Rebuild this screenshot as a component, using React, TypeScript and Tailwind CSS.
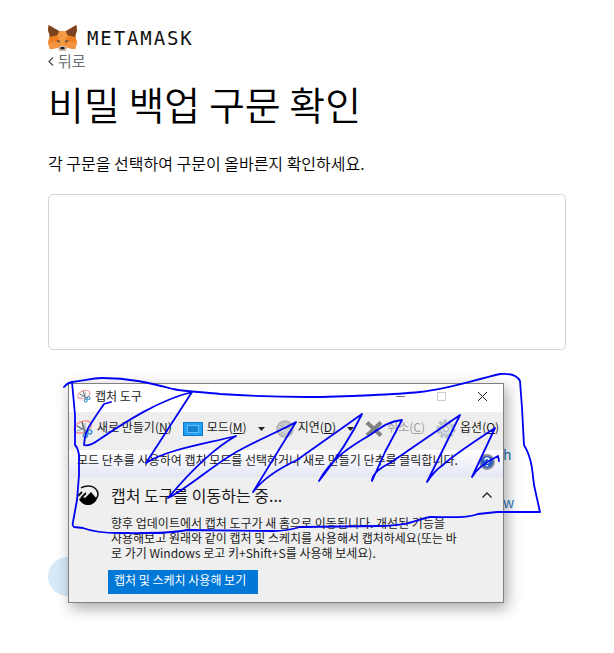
import type { ReactNode } from "react";

function FoxLogo() {
  return (
    <svg viewBox="0 0 87 84" className="h-7 w-[29px]" aria-hidden="true">
      <path d="M2 3 34 22h19L85 3l2 16-5 17 5 20-6 20-24-5-5 10H35l-5-10-24 5L0 56l5-20L0 19z" fill="#f08a2c" />
      <path d="M2 3 34 22l-5 12-23 6-3-12L0 19z" fill="#7a4420" />
      <path d="M85 3 53 22l5 12 23 6 3-12 3-9z" fill="#7a4420" />
      <path d="M34 22h19l5 12-8 34H37l-8-34z" fill="#f39a45" />
      <path d="M29 34 5 40 0 56l26-3 8 3zM58 34l24 6 5 16-26-3-8 3z" fill="#ee8020" />
      <path d="M26 53 0 56l6 20 24-5 7-3zM61 53l26 3-6 20-24-5-7-3z" fill="#f59440" />
      <path d="M23 50l13-1-1 7zM64 50l-13-1 1 7z" fill="#5c5048" />
      <path d="M30 70l7-4h13l7 4-6 11H36z" fill="#cdbcb2" />
      <path d="M38 69h11l1 7H37z" fill="#1d1d20" />
    </svg>
  );
}

function ScissorsIcon({ className }: { className: string }) {
  return (
    <svg viewBox="0 0 20 20" className={className} fill="none" aria-hidden="true">
      <ellipse cx="9.800" cy="8" rx="9" ry="5.500" transform="rotate(-22 9.800 8)" stroke="#f58a8a" strokeWidth="1.300" />
      <path d="M9 3l3 11M4 7l11 6" stroke="#56606a" strokeWidth="1.400" />
      <path d="M4 12l9-3M12 4v9" stroke="#9aa3aa" />
      <circle cx="12.500" cy="16.500" r="2" stroke="#3a95cf" strokeWidth="1.600" />
      <circle cx="16.800" cy="13" r="2" stroke="#3a95cf" strokeWidth="1.600" />
    </svg>
  );
}

function ModeIcon() {
  return (
    <svg viewBox="0 0 20 14" className="h-[14px] w-5" aria-hidden="true">
      <rect x=".5" y=".5" width="19" height="13" fill="#1fa2f5" stroke="#1277c4" />
      <rect x="4.500" y="3.500" width="11" height="7" fill="#1583d2" stroke="#b5e0ff" strokeDasharray="1 1" />
    </svg>
  );
}

function ClockIcon() {
  return (
    <svg viewBox="0 0 18 18" className="size-[18px]" fill="none" aria-hidden="true">
      <circle cx="9" cy="9" r="7.800" fill="#d3d5d7" stroke="#b1b4b7" strokeWidth="2" />
      <circle cx="9" cy="9" r="5" stroke="#93979b" strokeWidth="1.500" strokeDasharray="1 1.600" />
      <path d="M5 5l4 4 4-2" stroke="#8a8e92" />
    </svg>
  );
}

function CrossIcon() {
  return (
    <svg viewBox="0 0 18 16" className="h-4 w-[18px]" aria-hidden="true">
      <path d="M2 1.500 16 14.500M16 1.500 2 14.500" stroke="#828282" strokeWidth="4" />
    </svg>
  );
}

function GearIcon() {
  return (
    <svg viewBox="0 0 20 20" className="size-5" fill="none" aria-hidden="true">
      <circle cx="10" cy="10" r="8.300" stroke="#b5c0c6" strokeWidth="2.600" strokeDasharray="3.200 2" />
      <circle cx="10" cy="10" r="6.500" fill="#d5dcdf" stroke="#b5c0c6" strokeWidth="1.500" />
      <circle cx="10" cy="10" r="2.500" fill="#eee" stroke="#a9b3b9" />
    </svg>
  );
}

function HelpIcon() {
  return (
    <svg viewBox="0 0 16 16" className="size-4" fill="none" aria-hidden="true">
      <circle cx="8" cy="8" r="7" fill="#2c5fc4" stroke="#8c8f99" strokeWidth="1.800" />
      <path d="M5.800 6.200a2.200 2.200 0 1 1 3.300 2Q8 8.800 8 9.800M8 11v1.600" stroke="#fff" strokeWidth="1.600" />
    </svg>
  );
}

function SketchIcon() {
  return (
    <svg viewBox="0 0 22 20" className="h-5 w-[22px]" fill="none" aria-hidden="true">
      <path d="M4 3C6 1.500 9 1 12 1c5 0 9 4 9 8 0 2-1 4-2 5" stroke="#111" strokeWidth="1.500" />
      <path d="M2 14l4-2 2 1 6-6 6 7c-2 4-5 6-9 6-4 0-7-2-9-6z" fill="#000" />
      <path d="M1 11 5 7M4 13 9 8" stroke="#111" strokeWidth="1.800" />
    </svg>
  );
}

function Caret() {
  return (
    <svg viewBox="0 0 7 4" className="h-1 w-[7px]" aria-hidden="true">
      <path d="M0 0h7L3.500 4z" fill="#222" />
    </svg>
  );
}

type ToolProps = { icon: ReactNode; label: string; hotkey: string; disabled?: boolean };

function Tool({ icon, label, hotkey, disabled }: ToolProps) {
  return (
    <button type="button" disabled={disabled} className="flex items-center gap-1 whitespace-nowrap disabled:text-[#a0a0a0]">
      {icon}
      <span className="pb-1">
        {label}(<u>{hotkey}</u>)
      </span>
    </button>
  );
}

function SnippingTool() {
  return (
    <div
      role="dialog"
      aria-label="캡처 도구"
      className="absolute top-[33px] left-[20px] w-[436px] border border-[#808080] bg-[#efefef] text-[12px] text-[#1a1a1a] shadow-[3px_5px_14px_rgba(0,0,0,0.35)]"
    >
      <div className="flex h-7 items-center bg-white pr-4 pb-1 pl-2">
        <ScissorsIcon className="mr-1 size-[14px]" />
        <span className="flex-1">캡처 도구</span>
        <div className="flex items-center gap-8">
          <button type="button" aria-label="최소화">
            <svg viewBox="0 0 9 9" className="size-[9px]" stroke="#777">
              <path d="M0 4.500h9" />
            </svg>
          </button>
          <button type="button" aria-label="최대화" disabled>
            <svg viewBox="0 0 9 9" className="size-[9px]" fill="none" stroke="#ccc">
              <path d="M.5.5h8v8h-8z" />
            </svg>
          </button>
          <button type="button" aria-label="닫기">
            <svg viewBox="0 0 9 9" className="size-[9px]" stroke="#222">
              <path d="M0 0l9 9M9 0 0 9" />
            </svg>
          </button>
        </div>
      </div>

      <div className="flex h-[38px] items-center gap-[11px] bg-[#eee] pb-1 pl-1">
        <Tool icon={<ScissorsIcon className="size-5" />} label="새로 만들기" hotkey="N" />
        <Tool icon={<ModeIcon />} label="모드" hotkey="M" />
        <button type="button" aria-label="모드 선택">
          <Caret />
        </button>
        <Tool icon={<ClockIcon />} label="지연" hotkey="D" />
        <button type="button" aria-label="지연 시간 선택">
          <Caret />
        </button>
        <Tool icon={<CrossIcon />} label="취소" hotkey="C" disabled />
        <Tool icon={<GearIcon />} label="옵션" hotkey="O" />
      </div>

      <div className="flex h-[27px] items-center justify-between bg-linear-to-b from-white to-[#e4e6f4] px-2 pb-1 whitespace-nowrap">
        <span className="pb-1">모드 단추를 사용하여 캡처 모드를 선택하거나 새로 만들기 단추를 클릭합니다.</span>
        <button type="button" aria-label="도움말">
          <HelpIcon />
        </button>
      </div>

      <div className="flex gap-3 pt-2 pr-[11px] pb-2 pl-2">
        <SketchIcon />
        <div className="flex-1">
          <div className="flex items-center justify-between">
            <h2 className="text-[16px] leading-5">캡처 도구를 이동하는 중...</h2>
            <button type="button" aria-label="접기">
              <svg viewBox="0 0 10 6" className="h-[6px] w-[10px]" fill="none" stroke="#222" strokeWidth="1.300">
                <path d="M.5 5.500 5 1l4.500 4.500" />
              </svg>
            </button>
          </div>
          <p className="mt-[10px] leading-[15px] whitespace-nowrap">
            향후 업데이트에서 캡처 도구가 새 홈으로 이동됩니다. 개선된 기능을
            <br />
            사용해보고 원래와 같이 캡처 및 스케치를 사용해서 캡처하세요(또는 바
            <br />로 가기 Windows 로고 키+Shift+S를 사용해 보세요).
          </p>
          <button type="button" className="mt-[10px] -ml-[3px] flex h-6 w-[150px] items-center bg-[#0078d7] px-[6px] pb-1 whitespace-nowrap text-white">
            캡처 및 스케치 사용해 보기
          </button>
        </div>
      </div>
    </div>
  );
}

// freehand pen marks drawn over the tool window
function PenMarks() {
  return (
    <svg
      viewBox="60 370 484 168"
      className="pointer-events-none absolute top-[20px] left-[12px] h-[168px] w-[484px]"
      fill="none"
      stroke="#0000f5"
      strokeWidth="1.800"
      strokeLinecap="round"
      strokeLinejoin="round"
      aria-hidden="true"
    >
      <path d="M64 387Q67 383 72 382C85 381 90 378 102 378 130 378 150 383 173 389 188 392 204 392 220 394 250 396 280 397 307 397 345 397 400 394 420 392 450 389 470 381 500 374 512 373 518 377 520 381L522 408 524 445Q530 455 532 468L534 485 540 512H497L478 514C468 518 455 517 430 517 415 520 408 526 380 526L300 527Q287 531 273 531L187 530C170 534 140 533 120 533 100 533 88 530 83 528L74 527Q72 526 73 522L77 500 79 475V455Q78 448 75 445L75 415 72 382" />
      <path d="M111 402 104 404Q97 414 90 425 85 432 84 445 89 447 100 439C128 420 160 400 192 392L146 463C166 450 200 445 236 436 212 449 190 472 168 498 190 487 215 463 240 450 258 440 280 431 296 422L253 492C262 480 280 468 297 460L362 414C350 439 337 458 319 481 331 458 353 445 370 435 380 428 389 421 402 420L385 452 372 481Q372 472 390 463L460 415 427 482Q435 470 443 465C455 454 477 440 495 428L472 477Q478 466 498 456L499 461" />
    </svg>
  );
}

export default function App() {
  return (
    <main className="min-h-screen overflow-x-clip bg-white px-12 pt-6 pb-14 font-['Noto_Sans_CJK_KR',sans-serif] text-black">
      <header className="flex items-center gap-[10px]">
        <FoxLogo />
        <span className="font-['DejaVu_Sans_Mono',monospace] text-[19px] leading-7 tracking-widest text-[#111]">METAMASK</span>
      </header>

      <a href="#back" className="flex h-5 items-center gap-1 pb-[2px] text-[15px] text-[#6a6d72]">
        <svg viewBox="0 0 6 9" className="h-[9px] w-[6px]" fill="none" stroke="#555" strokeWidth="1.300">
          <path d="M5 .5 1 4.500l4 4" />
        </svg>
        뒤로
      </a>

      <h1 className="mt-[3px] text-[39px] leading-[56px] font-[350]">비밀 백업 구문 확인</h1>
      <p className="mt-5 text-[16px] leading-6 font-[350]">각 구문을 선택하여 구문이 올바른지 확인하세요.</p>

      <div className="mt-[19px] h-[156px] rounded-[5px] border border-[#d2d4d6]" />

      <section className="relative">
        <div className="flex flex-col items-start gap-6 pt-[92px] pl-[455px] text-[14px] leading-6 text-[#1f78c1]">
          <button type="button">h</button>
          <button type="button">w</button>
        </div>
        <button type="button" disabled aria-label="확인" className="mt-[43px] block h-[39px] w-40 rounded-full bg-[#d6e9f8]" />
        <SnippingTool />
        <PenMarks />
      </section>
    </main>
  );
}
